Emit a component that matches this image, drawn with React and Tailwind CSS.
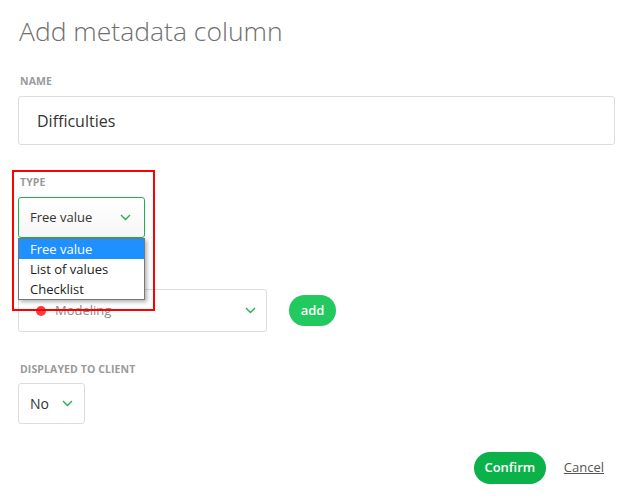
import React from "react";

function Chevron({ className = "" }) {
  return (
    <svg width="11" height="7" viewBox="0 0 11 7" className={className} fill="none">
      <path d="M1 1l4.5 4.5L10 1" stroke="#22b14c" strokeWidth="1.4" />
    </svg>
  );
}

function Label({ children }) {
  return (
    <div className="text-[10.5px] leading-[12px] font-bold tracking-[0.1px] text-[#9a9a9a] uppercase">
      {children}
    </div>
  );
}

export default function App() {
  const font = { fontFamily: '"Open Sans", "Noto Sans", sans-serif' };
  return (
    <div className="relative w-[630px] h-[499px] bg-white overflow-hidden" style={font}>
      <div className="flex flex-col pl-[18px] pr-[15px]">
        <h1 className="mt-[13px] text-[26.5px] leading-[36px] font-light text-[#6f6f6f] pl-[1px]">
          Add metadata column
        </h1>

        <div className="mt-[26px] pl-[2px]">
          <Label>Name</Label>
        </div>
        <div className="mt-[9px] h-[49px] border border-[#dcdcdc] rounded-[3px] flex items-center pl-[18px] text-[16px] text-[#333]">
          Difficulties
        </div>

        <div className="mt-[31px] pl-[2px]">
          <Label>Type</Label>
        </div>
        <div className="mt-[9px] w-[127px] h-[41px] border border-[#22b14c] rounded-[3px] flex items-center justify-between pl-[11px] pr-[13px] text-[13px] text-[#333] bg-gradient-to-b from-white to-[#f6f6f6]">
          <span>Free value</span>
          <Chevron />
        </div>

        <div className="mt-[20px] h-[12px]" />
        <div className="mt-[19px] flex items-center">
          <div className="w-[249px] h-[43px] border border-[#dcdcdc] rounded-[3px] flex items-center justify-between pl-[17px] pr-[10px]">
            <div className="flex items-center gap-[9px] text-[13px] text-[#888]">
              <span className="w-[10px] h-[10px] rounded-full bg-[#ff3b3b]" />
              <span>Modeling</span>
            </div>
            <Chevron />
          </div>
          <button className="ml-[22px] w-[47px] h-[31px] rounded-full bg-[#22c95e] text-white text-[13px] font-semibold flex items-center justify-center">
            add
          </button>
        </div>

        <div className="mt-[31px] pl-[2px]">
          <Label>Displayed to client</Label>
        </div>
        <div className="mt-[8px] w-[67px] h-[41px] border border-[#dcdcdc] rounded-[3px] flex items-center pl-[11px] gap-[13px] text-[14px] text-[#333]">
          <span>No</span>
          <Chevron />
        </div>

        <div className="mt-[28px] flex items-center justify-end pr-[11px]">
          <button className="w-[72px] h-[32px] rounded-full bg-[#0bb24a] text-white text-[13px] font-semibold">
            Confirm
          </button>
          <a className="ml-[18px] text-[13px] text-[#555] underline">Cancel</a>
        </div>
      </div>

      {/* open dropdown list */}
      <div className="absolute left-[18px] top-[238px] w-[127px] border border-[#777] bg-white shadow-[2px_2px_4px_rgba(0,0,0,0.3)] text-[13px] text-[#222]">
        <div className="h-[20px] leading-[20px] pl-[11px] bg-[#1e90ff] text-white">Free value</div>
        <div className="h-[20px] leading-[20px] pl-[11px]">List of values</div>
        <div className="h-[20px] leading-[20px] pl-[11px]">Checklist</div>
      </div>

      {/* red annotation box */}
      <div className="absolute left-[12px] top-[170px] w-[143px] h-[141px] border-2 border-[#ff0000] pointer-events-none" />
    </div>
  );
}
